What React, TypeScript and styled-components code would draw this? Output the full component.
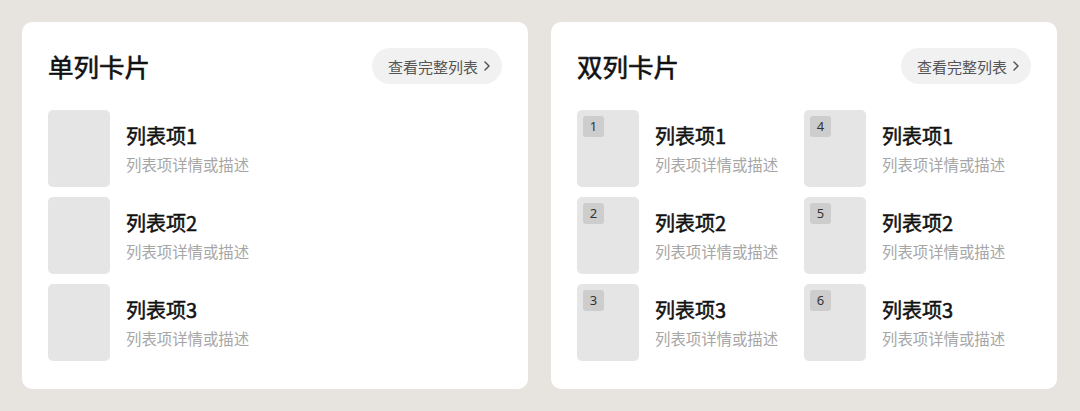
import styled, { createGlobalStyle } from 'styled-components';

const GlobalStyle = createGlobalStyle`
  html, body {
    margin: 0;
    padding: 0;
    background: #e7e4df;
  }
  body {
    font-family: "Noto Sans CJK SC", "Noto Sans", sans-serif;
  }
`

const Page = styled.div`
  display: grid;
  grid-template-columns: 506px 506px;
  column-gap: 23px;
  padding: 22px;
  width: 1080px;
  height: 411px;
  box-sizing: border-box;
`

const Card = styled.div`
  background: #ffffff;
  border-radius: 10px;
  padding: 26px 26px 25px 26px;
  display: flex;
  flex-direction: column;
  gap: 26px;
`

const Header = styled.div`
  display: flex;
  align-items: center;
  justify-content: space-between;
  height: 36px;
`

const Title = styled.div`
  font-size: 25.5px;
  font-weight: 400;
  -webkit-text-stroke: 0.6px #111;
  color: #111;
  line-height: 36px;
`

const MoreButton = styled.div`
  display: flex;
  align-items: center;
  gap: 5px;
  height: 36px;
  padding: 0 11px 0 16px;
  border-radius: 18px;
  background: #f1f1f1;
  color: #555;
  font-size: 15px;
`

const List = styled.div<{ $cols: number }>`
  display: grid;
  grid-template-columns: repeat(${p => p.$cols}, 1fr);
  grid-auto-flow: ${p => (p.$cols > 1 ? 'column' : 'row')};
  grid-template-rows: repeat(3, 77px);
  row-gap: 10px;
`

const Item = styled.div`
  display: flex;
  align-items: center;
  gap: 16px;
`

const Thumb = styled.div`
  position: relative;
  width: 62px;
  height: 77px;
  flex-shrink: 0;
  border-radius: 5px;
  background: #e5e5e5;
`

const Badge = styled.div`
  position: absolute;
  top: 6px;
  left: 6px;
  width: 21px;
  height: 21px;
  border-radius: 3px;
  background: #cdcdcd;
  color: #333;
  font-family: "Noto Sans", sans-serif;
  font-size: 13px;
  line-height: 21px;
  text-align: center;
`

const Texts = styled.div`
  display: flex;
  flex-direction: column;
  gap: 3px;
`

const ItemTitle = styled.div`
  font-size: 20px;
  font-weight: 400;
  -webkit-text-stroke: 0.5px #111;
  color: #111;
  line-height: 28px;
`

const ItemDesc = styled.div`
  font-size: 15.4px;
  color: #a6a6a6;
  line-height: 22px;
`

const Chevron = () => (
  <svg width="8" height="12" viewBox="0 0 8 12" fill="none">
    <path d="M2 2l4 4-4 4" stroke="#555" strokeWidth="1.5" strokeLinecap="round" strokeLinejoin="round" />
  </svg>
)

const ListCard = ({ title, cols }: { title: string; cols: number }) => {
  const items = cols > 1 ? [1, 2, 3, 1, 2, 3] : [1, 2, 3]
  return (
    <Card>
      <Header>
        <Title>{title}</Title>
        <MoreButton>
          查看完整列表
          <Chevron />
        </MoreButton>
      </Header>
      <List $cols={cols}>
        {items.map((n, i) => (
          <Item key={i}>
            <Thumb>{cols > 1 && <Badge>{i + 1}</Badge>}</Thumb>
            <Texts>
              <ItemTitle>列表项{n}</ItemTitle>
              <ItemDesc>列表项详情或描述</ItemDesc>
            </Texts>
          </Item>
        ))}
      </List>
    </Card>
  )
}

const App = () => (
  <>
    <GlobalStyle />
    <Page>
      <ListCard title="单列卡片" cols={1} />
      <ListCard title="双列卡片" cols={2} />
    </Page>
  </>
)

export default App
